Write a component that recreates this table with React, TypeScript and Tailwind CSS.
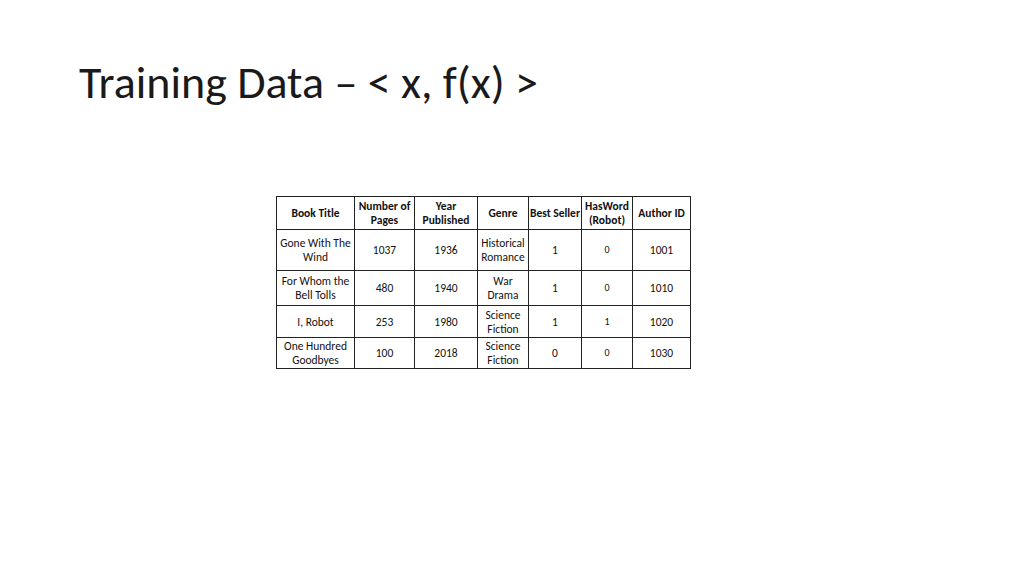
const headers = [
  ["Book Title"],
  ["Number of", "Pages"],
  ["Year", "Published"],
  ["Genre"],
  ["Best Seller"],
  ["HasWord", "(Robot)"],
  ["Author ID"],
];

const rows = [
  { h: 41, cells: [["Gone With The", "Wind"], ["1037"], ["1936"], ["Historical", "Romance"], ["1"], ["0"], ["1001"]] },
  { h: 35, cells: [["For Whom the", "Bell Tolls"], ["480"], ["1940"], ["War", "Drama"], ["1"], ["0"], ["1010"]] },
  { h: 32, cells: [["I, Robot"], ["253"], ["1980"], ["Science", "Fiction"], ["1"], ["1"], ["1020"]] },
  { h: 31, cells: [["One Hundred", "Goodbyes"], ["100"], ["2018"], ["Science", "Fiction"], ["0"], ["0"], ["1030"]] },
];

const widths = [78, 60, 63, 51, 53, 51, 58];

export default function App() {
  return (
    <div
      className="w-[1024px] h-[576px] bg-white text-black overflow-hidden"
      style={{ fontFamily: "Carlito, Lato, 'Open Sans', sans-serif" }}
    >
      <h1 className="pl-[79px] pt-[55px] text-[46px] leading-[54px] font-light text-[#1a1a1a]">
        Training Data – &lt; x, f(x) &gt;
      </h1>
      <div className="pl-[276px] pt-[87px]">
        <table className="border-collapse text-[11.5px] leading-[14px] text-center text-[#111]">
          <thead>
            <tr className="h-[33px]">
              {headers.map((lines, i) => (
                <th
                  key={i}
                  className="border border-[#222] font-bold p-0 whitespace-nowrap"
                  style={{ width: widths[i] }}
                >
                  {lines.map((l) => (
                    <div key={l}>{l}</div>
                  ))}
                </th>
              ))}
            </tr>
          </thead>
          <tbody>
            {rows.map((r, ri) => (
              <tr key={ri} style={{ height: r.h }}>
                {r.cells.map((lines, i) => (
                  <td
                    key={i}
                    className={`border border-[#222] p-0 whitespace-nowrap ${i === 5 ? "text-[10px]" : ""}`}
                  >
                    {lines.map((l) => (
                      <div key={l}>{l}</div>
                    ))}
                  </td>
                ))}
              </tr>
            ))}
          </tbody>
        </table>
      </div>
    </div>
  );
}
